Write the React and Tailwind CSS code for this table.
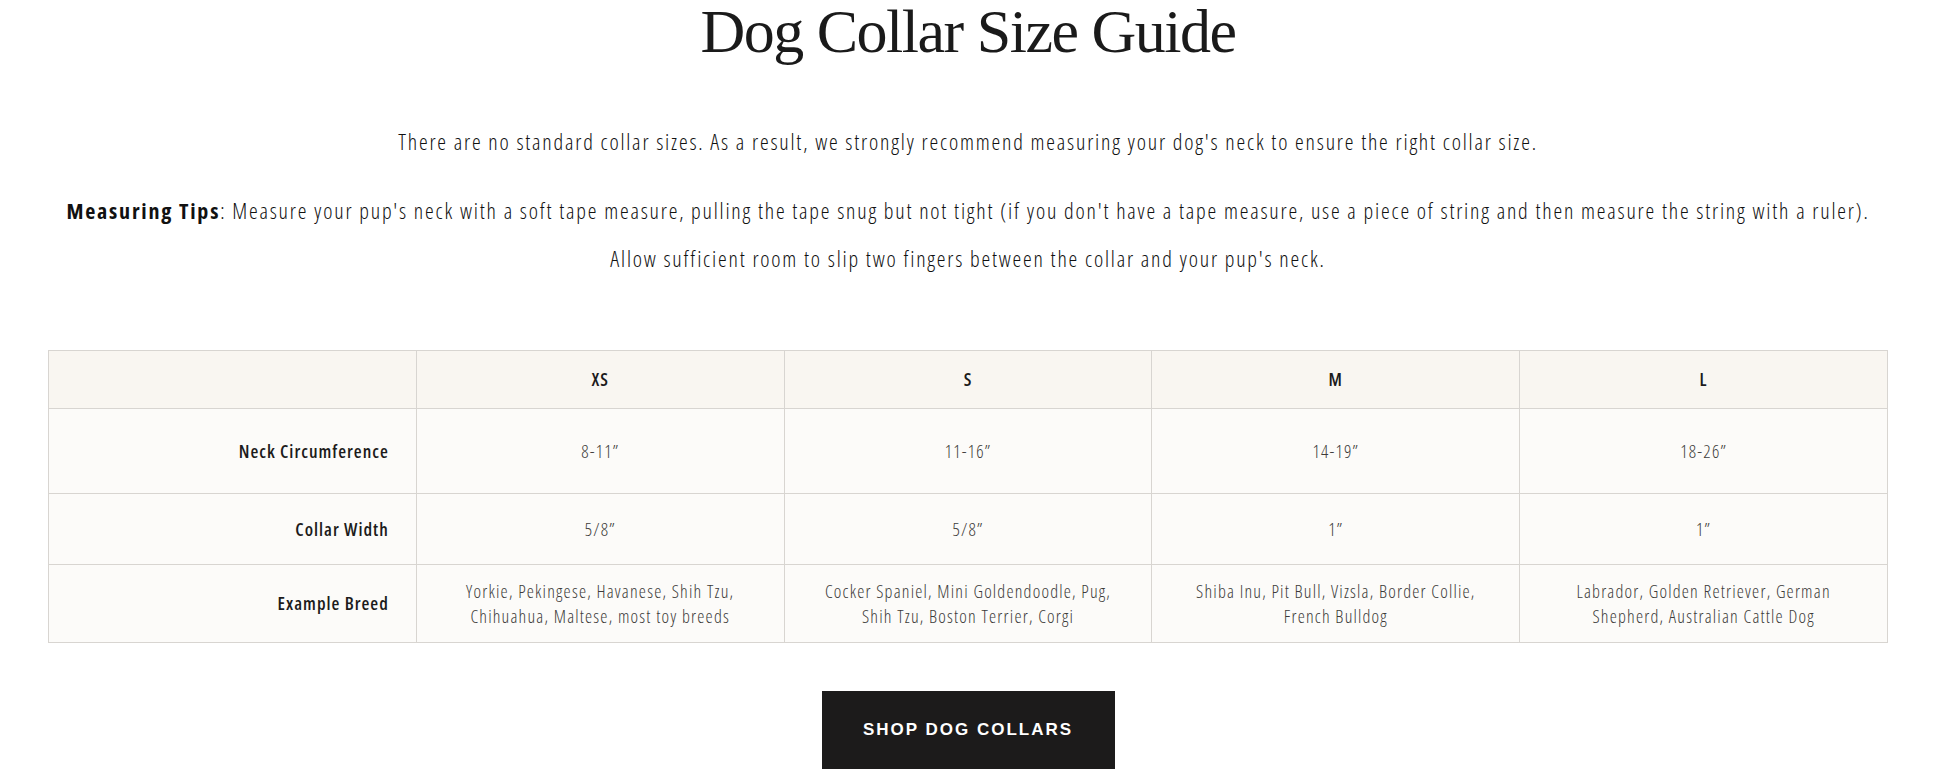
import React from "react";

const sizes = [
  {
    size: "XS",
    neck: "8-11\u201d",
    width: "5/8\u201d",
    breeds: ["Yorkie, Pekingese, Havanese, Shih Tzu,", "Chihuahua, Maltese, most toy breeds"],
  },
  {
    size: "S",
    neck: "11-16\u201d",
    width: "5/8\u201d",
    breeds: ["Cocker Spaniel, Mini Goldendoodle, Pug,", "Shih Tzu, Boston Terrier, Corgi"],
  },
  {
    size: "M",
    neck: "14-19\u201d",
    width: "1\u201d",
    breeds: ["Shiba Inu, Pit Bull, Vizsla, Border Collie,", "French Bulldog"],
  },
  {
    size: "L",
    neck: "18-26\u201d",
    width: "1\u201d",
    breeds: ["Labrador, Golden Retriever, German", "Shepherd, Australian Cattle Dog"],
  },
];

const cell = "border border-[#d8d5d1] text-center align-middle";
const label = "border border-[#d8d5d1] text-right align-middle pr-[27px] font-semibold text-[18px] tracking-[1px] text-[#1c1b1b]";

export default function App() {
  return (
    <div className="min-h-screen bg-white pl-[48px] pr-[58px] font-['Open_Sans',sans-serif] font-stretch-condensed text-[#111111]">
      <h1 className="text-center font-['Liberation_Serif',serif] text-[62px] leading-none tracking-[-1.5px] text-[#1a1a1a] font-stretch-normal">
        Dog Collar Size Guide
      </h1>

      <p className="mt-[55px] text-center text-[22px] font-light tracking-[1.8px] leading-[48px]">
        There are no standard collar sizes. As a result, we strongly recommend measuring your dog's neck to ensure the right collar size.
      </p>

      <p className="mt-[21px] text-center text-[22px] font-light tracking-[1.8px] leading-[48px]">
        <span className="whitespace-nowrap">
          <strong className="font-bold">Measuring Tips</strong>: Measure your pup's neck with a soft tape measure, pulling the tape snug but not tight (if you don't have a tape measure, use a piece of string and then measure the string with a ruler).
        </span>
        <br />
        Allow sufficient room to slip two fingers between the collar and your pup's neck.
      </p>

      <table className="mt-[68px] w-full table-fixed border-collapse">
        <thead>
          <tr className="h-[58px] bg-[#f9f6f1]">
            <th className={cell}></th>
            {sizes.map((s) => (
              <th key={s.size} className={`${cell} text-[18px] font-semibold tracking-[1px] text-[#1c1b1b]`}>
                {s.size}
              </th>
            ))}
          </tr>
        </thead>
        <tbody className="bg-[#fcfbf9] text-[18px] font-light tracking-[1.2px] text-[#3d3b3a]">
          <tr className="h-[85px]">
            <td className={label}>Neck Circumference</td>
            {sizes.map((s) => (
              <td key={s.size} className={cell}>
                {s.neck}
              </td>
            ))}
          </tr>
          <tr className="h-[71px]">
            <td className={label}>Collar Width</td>
            {sizes.map((s) => (
              <td key={s.size} className={cell}>
                {s.width}
              </td>
            ))}
          </tr>
          <tr className="h-[78px]">
            <td className={label}>Example Breed</td>
            {sizes.map((s) => (
              <td key={s.size} className={`${cell} leading-[25px]`}>
                {s.breeds[0]}
                <br />
                {s.breeds[1]}
              </td>
            ))}
          </tr>
        </tbody>
      </table>

      <div className="mt-[48px] flex justify-center pb-[13px]">
        <button className="flex h-[78px] w-[293px] items-center justify-center bg-[#1c1b1b] font-['Liberation_Sans',sans-serif] font-stretch-normal text-[17px] font-bold tracking-[2px] text-white">
          SHOP DOG COLLARS
        </button>
      </div>
    </div>
  );
}
